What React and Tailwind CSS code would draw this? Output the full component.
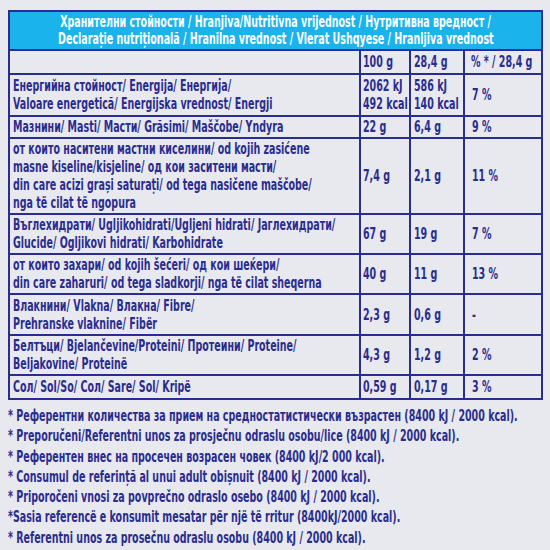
const ROWS = [
  {
    label: ['Енергийна стойност/ Energija/ Енергија/', 'Valoare energetică/ Energijska vrednost/ Energji'],
    a: ['2062 kJ', '492 kcal'],
    b: ['586 kJ', '140 kcal'],
    c: '7 %',
    pad: 'py-[2px]',
  },
  { label: ['Мазнини/ Masti/ Масти/ Grăsimi/ Maščobe/ Yndyra'], a: ['22 g'], b: ['6,4 g'], c: '9 %', pad: 'py-[1px]' },
  {
    label: [
      'от които наситени мастни киселини/ od kojih zasićene',
      'masne kiseline/kisjeline/ од кои заситени масти/',
      'din care acizi grași saturați/ od tega nasičene maščobe/',
      'nga të cilat të ngopura',
    ],
    a: ['7,4 g'],
    b: ['2,1 g'],
    c: '11 %',
    pad: 'py-[1px]',
  },
  {
    label: ['Въглехидрати/ Ugljikohidrati/Ugljeni hidrati/ Јаглехидрати/', 'Glucide/ Ogljikovi hidrati/ Karbohidrate'],
    a: ['67 g'],
    b: ['19 g'],
    c: '7 %',
    pad: 'py-[1px]',
  },
  {
    label: ['от които захари/ od kojih šećeri/ од кои шеќери/', 'din care zaharuri/ od tega sladkorji/ nga të cilat sheqerna'],
    a: ['40 g'],
    b: ['11 g'],
    c: '13 %',
    pad: 'py-[1px]',
  },
  { label: ['Влакнини/ Vlakna/ Влакна/ Fibre/', 'Prehranske vlaknine/ Fibër'], a: ['2,3 g'], b: ['0,6 g'], c: '-', pad: 'py-[1.5px]' },
  {
    label: ['Белтъци/ Bjelančevine/Proteini/ Протеини/ Proteine/', 'Beljakovine/ Proteinë'],
    a: ['4,3 g'],
    b: ['1,2 g'],
    c: '2 %',
    pad: 'py-[1px]',
  },
  { label: ['Сол/ Sol/So/ Сол/ Sare/ Sol/ Kripë'], a: ['0,59 g'], b: ['0,17 g'], c: '3 %', pad: 'py-[2px]' },
]

const NOTES = [
  '* Референтни количества за прием на средностатистически възрастен (8400 kJ / 2000 kcal).',
  '* Preporučeni/Referentni unos za prosječnu odraslu osobu/lice (8400 kJ / 2000 kcal).',
  '* Референтен внес на просечен возрасен човек (8400 kJ/2 000 kcal).',
  '* Consumul de referință al unui adult obișnuit (8400 kJ / 2000 kcal).',
  '* Priporočeni vnosi za povprečno odraslo osebo (8400 kJ / 2000 kcal).',
  '*Sasia referencë e konsumit mesatar për një të rritur (8400kJ/2000 kcal).',
  '* Referentni unos za prosečnu odraslu osobu (8400 kJ / 2000 kcal).',
]

// condensed look: the installed face is too wide, so squeeze it
const T = ({ children }) => (
  <span className="inline-block whitespace-nowrap origin-left scale-x-[0.66]">{children}</span>
)

const Lines = ({ lines }) =>
  lines.map((l, i) => (
    <div key={i} className="whitespace-nowrap">
      <T>{l}</T>
    </div>
  ))

const cell = 'border-2 border-[#2a2d8e] align-middle'

export default function App() {
  return (
    <div
      className="w-[550px] h-[550px] bg-[#e8e8ef] text-[#2a2d8e] font-bold text-[16px] overflow-hidden pt-[10px] px-[8px]"
      style={{ fontFamily: '"DejaVu Sans Condensed", "DejaVu Sans", sans-serif' }}
    >
      {/* Table */}
      <table className="w-[533px] table-fixed border-collapse border-2 border-[#2a2d8e] leading-[18px]">
        <colgroup>
          <col className="w-[351px]" />
          <col className="w-[50px]" />
          <col className="w-[54px]" />
          <col className="w-[78px]" />
        </colgroup>
        <thead>
          <tr>
            <th colSpan={4} className="bg-[#1bb3ec] text-white font-bold text-[15px] leading-[17px] pt-[2px] pb-[1px] border-2 border-[#2a2d8e]">
              <div className="flex justify-center">
                <span className="inline-block whitespace-nowrap scale-x-[0.705]">
                  Хранителни стойности / Hranjiva/Nutritivna vrijednost / Нутритивна вредност /
                </span>
              </div>
              <div className="flex justify-center">
                <span className="inline-block whitespace-nowrap scale-x-[0.705]">
                  Declarație nutrițională / Hranilna vrednost / Vlerat Ushqyese / Hranljiva vrednost
                </span>
              </div>
            </th>
          </tr>
          <tr>
            <th className={`${cell} h-[24px]`}></th>
            <th className={`${cell} text-left font-bold pl-[2px]`}><T>100 g</T></th>
            <th className={`${cell} text-left font-bold pl-[3px]`}><T>28,4 g</T></th>
            <th className={`${cell} text-left font-bold pl-[6px]`}><T>% * / 28,4 g</T></th>
          </tr>
        </thead>
        <tbody>
          {ROWS.map((r, i) => (
            <tr key={i}>
              <td className={`${cell} pl-[3px] ${r.pad}`}>
                <Lines lines={r.label} />
              </td>
              <td className={`${cell} pl-[2px]`}>
                <Lines lines={r.a} />
              </td>
              <td className={`${cell} pl-[3px]`}>
                <Lines lines={r.b} />
              </td>
              <td className={`${cell} pl-[7px]`}>
                <T>{r.c}</T>
              </td>
            </tr>
          ))}
        </tbody>
      </table>

      {/* Footnotes */}
      <div className="mt-[6px] leading-[20.3px]">
        {NOTES.map((n, i) => (
          <div key={i} className="whitespace-nowrap">
            <T>{n}</T>
          </div>
        ))}
      </div>
    </div>
  )
}
